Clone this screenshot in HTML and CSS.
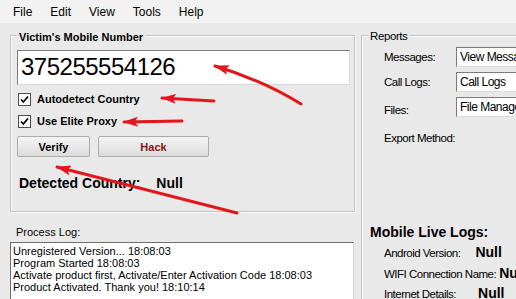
FILE: index.html
```html
<!DOCTYPE html>
<html>
<head>
<meta charset="utf-8">
<title>Mobile Hack</title>
<link rel="stylesheet" href="styles.css">
</head>
<body>
<nav class="menubar">
  <span class="menu-item">File</span>
  <span class="menu-item">Edit</span>
  <span class="menu-item">View</span>
  <span class="menu-item">Tools</span>
  <span class="menu-item">Help</span>
</nav>
<div class="main">
  <div class="left">
    <section class="group group-victim">
      <span class="legend legend-victim">Victim's Mobile Number</span>
      <div class="number-box">375255554126</div>
      <div class="check check-1">
        <span class="box"><svg width="11" height="11" viewBox="0 0 11 11"><path d="M2 5.5 L4.3 8 L9 2.5" fill="none" stroke="#000" stroke-width="1.8"/></svg></span>
        <span>Autodetect Country</span>
      </div>
      <div class="check check-2">
        <span class="box"><svg width="11" height="11" viewBox="0 0 11 11"><path d="M2 5.5 L4.3 8 L9 2.5" fill="none" stroke="#000" stroke-width="1.8"/></svg></span>
        <span>Use Elite Proxy</span>
      </div>
      <div class="buttons">
        <button class="btn btn-verify">Verify</button>
        <button class="btn btn-hack">Hack</button>
      </div>
      <div class="detected">
        <span>Detected Country:</span>
        <span class="detected-value">Null</span>
      </div>
    </section>
    <div class="proc-label">Process Log:</div>
    <div class="log">
      <div>Unregistered Version... 18:08:03</div>
      <div>Program Started 18:08:03</div>
      <div>Activate product first, Activate/Enter Activation Code 18:08:03</div>
      <div>Product Activated. Thank you! 18:10:14</div>
    </div>
  </div>
  <div class="right">
    <section class="group group-reports">
      <span class="legend legend-reports">Reports</span>
      <div class="report-grid">
        <span class="rlabel">Messages:</span>
        <div class="rinput">View Messages</div>
        <span class="rlabel">Call Logs:</span>
        <div class="rinput">Call Logs</div>
        <span class="rlabel rlabel-files">Files:</span>
        <div class="rinput">File Manager</div>
        <span class="rlabel rlabel-export">Export Method:</span>
      </div>
      <div class="live-title">Mobile Live Logs:</div>
      <div class="live-row live-row-1">
        <span>Android Version:</span>
        <span class="live-value value-android">Null</span>
      </div>
      <div class="live-row live-row-2">
        <span>WIFI Connection Name:</span>
        <span class="live-value value-wifi">Null</span>
      </div>
      <div class="live-row live-row-3">
        <span>Internet Details:</span>
        <span class="live-value value-internet">Null</span>
      </div>
    </section>
  </div>
</div>
<svg class="arrows" width="516" height="299" viewBox="0 0 516 299">
  <defs>
    <marker id="head" markerUnits="userSpaceOnUse" markerWidth="15" markerHeight="10" refX="14" refY="5" orient="auto">
      <path d="M0 0 L15 5 L0 10 L3 5 Z" fill="#e3161b"/>
    </marker>
  </defs>
  <path d="M301 104 Q262 80 215 66" fill="none" stroke="#e3161b" stroke-width="3" stroke-linecap="round" marker-end="url(#head)"/>
  <path d="M214 101 L162 98" fill="none" stroke="#e3161b" stroke-width="3" stroke-linecap="round" marker-end="url(#head)"/>
  <path d="M182 121 L124 122" fill="none" stroke="#e3161b" stroke-width="3" stroke-linecap="round" marker-end="url(#head)"/>
  <path d="M237 213 L57 167" fill="none" stroke="#e3161b" stroke-width="3" stroke-linecap="round" marker-end="url(#head)"/>
</svg>
</body>
</html>
```

FILE: styles.css
```css
* { box-sizing: border-box; }
html, body { margin: 0; padding: 0; }
body {
  width: 516px;
  height: 299px;
  overflow: hidden;
  position: relative;
  background: #e9e9e9;
  font-family: "Liberation Sans", Arial, sans-serif;
  color: #000;
}
.menubar {
  display: flex;
  height: 23px;
  padding: 1px 0 0 4px;
  background: #f2f2f2;
  font-size: 12px;
  line-height: 22px;
}
.menu-item { padding: 0 9px; }

.main {
  display: flex;
  align-items: flex-start;
  padding-top: 12px;
}
.left {
  flex: none;
  width: 345px;
  margin-left: 10px;
}
.group {
  border: 1px solid #c3c3c3;
  box-shadow: inset 1px 1px 0 #fafafa, 1px 1px 0 #fafafa;
}
.group-victim { height: 177px; }
.legend {
  display: block;
  width: fit-content;
  background: #e9e9e9;
  padding: 0 2px;
  font-size: 11px;
  line-height: 13px;
}
.legend-victim {
  margin: -5px 0 0 6px;
  font-weight: bold;
}
.number-box {
  margin: 6px 0 0 6px;
  width: 333px;
  height: 35px;
  background: #fff;
  border: 1px solid;
  border-color: #7b7b7b #dadada #dadada #7b7b7b;
  font-size: 24px;
  line-height: 32px;
  padding: 0 0 1px 3px;
  letter-spacing: -0.5px;
}
.check {
  display: flex;
  align-items: center;
  height: 13px;
  margin-left: 7px;
  font-size: 11px;
  font-weight: bold;
  line-height: 13px;
}
.check-1 { margin-top: 8px; }
.check-2 { margin-top: 9px; }
.box {
  display: flex;
  align-items: center;
  justify-content: center;
  width: 13px;
  height: 13px;
  margin-right: 6px;
  background: #fff;
  border: 1px solid #4d4d4d;
}
.buttons {
  display: flex;
  gap: 8px;
  margin: 8px 0 0 6px;
}
.btn {
  height: 21px;
  padding: 0;
  border: 1px solid #ababab;
  border-radius: 2px;
  background: linear-gradient(#f4f4f4, #dcdcdc);
  font-family: "Liberation Sans", Arial, sans-serif;
  font-size: 11px;
  font-weight: bold;
  color: #000;
}
.btn-verify { width: 73px; }
.btn-hack { width: 111px; color: #8e1212; }
.detected {
  display: flex;
  margin: 18px 0 0 8px;
  font-size: 14px;
  font-weight: bold;
  line-height: 16px;
}
.detected-value { margin-left: 16px; }

.proc-label {
  margin: 14px 0 0 6px;
  font-size: 11px;
  line-height: 13px;
}
.log {
  margin-top: 3px;
  width: 344px;
  height: 70px;
  background: #fff;
  border: 1px solid;
  border-color: #6e6e6e #d4d4d4 #d4d4d4 #6e6e6e;
  padding: 2px 2px;
  font-size: 11px;
  line-height: 12px;
  white-space: nowrap;
  overflow: hidden;
}

.right {
  flex: none;
  margin-left: 6px;
}
.group-reports {
  width: 220px;
  height: 300px;
}
.legend-reports {
  margin: -6px 0 0 6px;
  font-size: 11.5px;
  letter-spacing: -0.4px;
}
.report-grid {
  display: grid;
  grid-template-columns: 72px 90px;
  row-gap: 5px;
  align-items: start;
  margin: 4px 0 0 22px;
  font-size: 11.5px;
  letter-spacing: -0.5px;
}
.rlabel { line-height: 20px; }
.rlabel-files { padding-top: 3px; }
.rlabel-export { grid-column: 1 / span 2; padding-top: 3px; }
.rinput {
  height: 20px;
  background: #fff;
  border: 1px solid;
  border-color: #7b7b7b #dadada #dadada #7b7b7b;
  padding-left: 3px;
  font-size: 12px;
  line-height: 18px;
  white-space: nowrap;
  overflow: hidden;
}
.live-title {
  margin: 76px 0 0 8px;
  font-size: 14px;
  font-weight: bold;
  line-height: 16px;
}
.live-row {
  display: flex;
  align-items: baseline;
  margin-left: 22px;
  height: 20px;
  line-height: 20px;
  font-size: 11.5px;
  letter-spacing: -0.5px;
  white-space: nowrap;
}
.live-row-1 { margin-top: 2px; }
.live-row-2 { margin-top: 1px; }
.live-value {
  font-size: 14px;
  font-weight: bold;
  letter-spacing: 0;
}
.value-android { margin-left: 15px; }
.value-wifi { margin-left: 3px; }
.value-internet { margin-left: 22px; }

.arrows {
  position: absolute;
  top: 0;
  left: 0;
  pointer-events: none;
}
```
